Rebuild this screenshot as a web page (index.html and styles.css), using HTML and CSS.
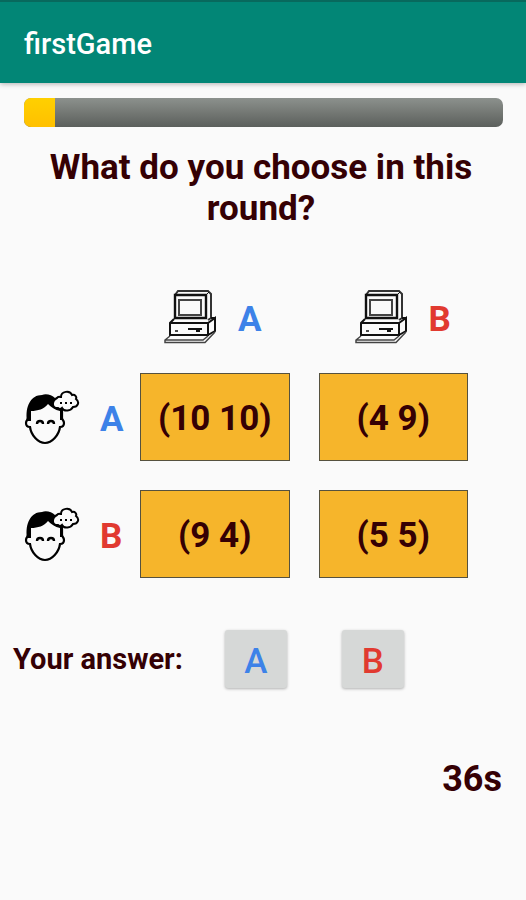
FILE: index.html
```html
<!DOCTYPE html>
<html lang="en">
<head>
<meta charset="utf-8">
<meta name="viewport" content="width=device-width, initial-scale=1">
<title>firstGame</title>
<link rel="stylesheet" href="styles.css">
</head>
<body>
<svg class="sprites" aria-hidden="true">
  <symbol id="computer" viewBox="0 0 54 56">
    <g fill="none" stroke="#111" stroke-width="2">
      <path d="M11 6L14 2H44L47 5V29L44 31" stroke="#333"/>
      <path d="M11 6H42V29H11Z" stroke-width="2.4"/>
      <path d="M42 6L45 3" stroke-width="1"/>
      <path d="M15 11H37V26H15Z" stroke="#444"/>
      <path d="M10 30L6 34V46H44V34H6M44 34L51 29V42L44 46M47 29H51"/>
      <path d="M6 47L1 51V53.500H41L51 43M1 51H39L44 47" stroke="#444" stroke-width="1.500"/>
      <path d="M24 40H38M32 42H36"/>
      <path d="M11 42H14" stroke-width="1.500"/>
    </g>
  </symbol>
  <symbol id="player" viewBox="0 0 56 57">
    <path d="M3 32C1 17 7 6 18 6C22 4 28 6 31 9L38 20V31H36V22C31 21 27 18 24 15C20 20 14 22 7 22V32Z" fill="#000"/>
    <path d="M4 29C4 31 2 31 2 34C2 37 4 38 6 38C7 46 14 54 21 54C28 54 35 46 36 38C38 38 40 37 40 34C40 31 38 31 38 29V20" fill="none" stroke="#000" stroke-width="2.200"/>
    <path d="M13 35C13 31 19 31 19 35M24 35C24 31 30 31 30 35" fill="none" stroke="#000" stroke-width="2.400"/>
    <path d="M34 19C28 20 27 12 33 9C34 7 36 8 37 8C37 2 46 1 48 6C51 5 53 8 52 10C56 13 54 18 49 18C47 22 40 23 38 19C37 20 35 20 34 19Z" fill="#fafafa" stroke="#000" stroke-width="2"/>
    <path d="M36 14H38M41 14H43M46 14H48" stroke="#000" stroke-width="2"/>
  </symbol>
</svg>

<header class="app-bar">
  <h1 class="app-title">firstGame</h1>
</header>

<main class="game">
  <progress class="round-progress" value="6.5" max="100" aria-label="Game progress"></progress>
  <h2 class="question">What do you choose in this round?</h2>

  <table class="payoffs">
    <thead>
      <tr class="payoff-row">
        <td></td>
        <th scope="col" class="player-label"><svg class="computer" aria-hidden="true"><use href="#computer"/></svg><span class="choice-a">A</span></th>
        <th scope="col" class="player-label player-label-last"><svg class="computer" aria-hidden="true"><use href="#computer"/></svg><span class="choice-b">B</span></th>
      </tr>
    </thead>
    <tbody>
      <tr class="payoff-row">
        <th scope="row" class="player-label"><svg class="person" aria-hidden="true"><use href="#player"/></svg><span class="choice-a">A</span></th>
        <td class="payoff">(10 10)</td>
        <td class="payoff">(4 9)</td>
      </tr>
      <tr class="payoff-row">
        <th scope="row" class="player-label"><svg class="person" aria-hidden="true"><use href="#player"/></svg><span class="choice-b">B</span></th>
        <td class="payoff">(9 4)</td>
        <td class="payoff">(5 5)</td>
      </tr>
    </tbody>
  </table>

  <section class="answer" aria-labelledby="answer-label">
    <span class="answer-label" id="answer-label">Your answer:</span>
    <div class="answer-buttons">
      <button type="button" class="answer-button choice-a">A</button>
      <button type="button" class="answer-button choice-b">B</button>
    </div>
  </section>

  <p class="timer">36s</p>
</main>
</body>
</html>
```
FILE: styles.css
```css
* {
  box-sizing: border-box;
}

body {
  margin: 0;
  background: #fafafa;
  color: #350004;
  font-family: Roboto, sans-serif;
  font-weight: 700;
}

.sprites {
  display: none;
}

.app-bar {
  display: flex;
  align-items: center;
  height: 83px;
  padding: 2px 24px 0;
  border-top: 2px solid #08695d;
  background: #028676;
  box-shadow: 0 1px 5px rgba(0, 0, 0, 0.3);
}

.app-title {
  margin: 0;
  color: #fff;
  font-size: 29px;
  font-weight: 500;
}

.game {
  padding-top: 15px;
}

.round-progress {
  appearance: none;
  display: block;
  width: calc(100% - 47px);
  height: 29px;
  margin-left: 24px;
  border: 0;
  border-radius: 7px;
  overflow: hidden;
}

.round-progress::-webkit-progress-bar {
  background: linear-gradient(#8c918d, #747874 50%, #5b5f5c);
}

.round-progress::-webkit-progress-value {
  background: linear-gradient(#ffd000, #ffc000);
}

.question {
  margin: 20px 20px 0 16px;
  font-size: 35px;
  font-weight: 700;
  line-height: 41px;
  text-align: center;
}

.payoffs {
  display: flex;
  flex-direction: column;
  gap: 28px;
  margin: 60px 58px 0 24px;
}

.payoffs tbody {
  display: grid;
  gap: 29px;
}

.payoff-row {
  display: grid;
  grid-template-columns: 87px 1fr 1fr;
  column-gap: 29px;
}

.payoffs th,
.payoffs td {
  padding: 0;
  font-size: 35px;
  font-weight: 700;
}

.payoffs .player-label {
  display: flex;
  align-items: center;
  gap: 20px;
  white-space: nowrap;
}

.player-label span {
  padding-top: 4px;
}

.payoffs thead .player-label {
  padding-left: 24px;
}

.payoffs thead .player-label-last {
  padding-left: 36px;
}

.payoffs .payoff {
  display: flex;
  align-items: center;
  justify-content: center;
  height: 88px;
  padding-top: 2px;
  border: 1px solid #55513f;
  background: #f6b52b;
}

.computer {
  flex: none;
  width: 54px;
  height: 56px;
}

.person {
  flex: none;
  width: 56px;
  height: 57px;
}

.choice-a {
  color: #3d82e8;
}

.choice-b {
  color: #e13a30;
}

.answer {
  display: flex;
  align-items: center;
  gap: 42px;
  margin: 52px 13px 0;
}

.answer-label {
  font-size: 29px;
}

.answer-buttons {
  display: flex;
  gap: 55px;
}

.answer-button {
  width: 62px;
  height: 58px;
  padding: 4px 0 0;
  border: 0;
  border-radius: 3px;
  background: #d6d8d7;
  box-shadow: 0 1px 3px rgba(0, 0, 0, 0.3);
  font: 500 35px Roboto, sans-serif;
}

.timer {
  margin: 70px 24px 0;
  font-size: 36px;
  line-height: 42px;
  text-align: right;
}
```
